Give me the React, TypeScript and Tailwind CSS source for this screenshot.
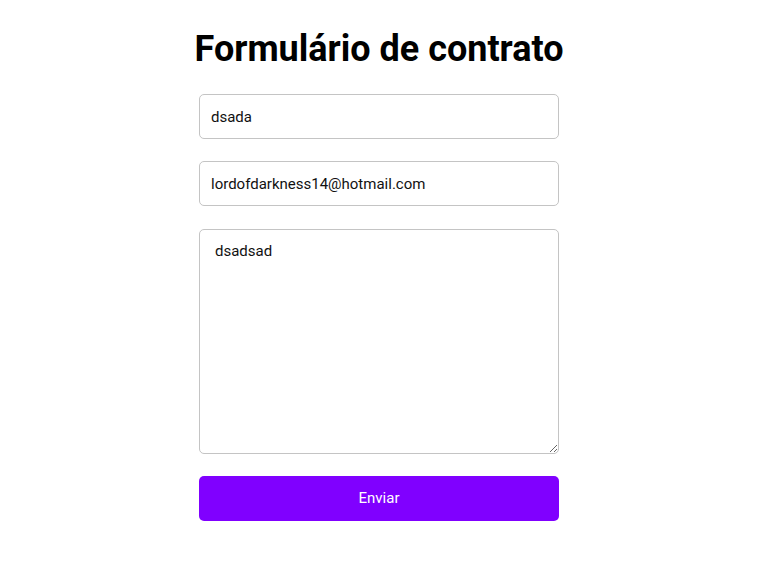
import React, { useState } from "react";

const App = (): JSX.Element => {
  const [nome, setNome] = useState("dsada");
  const [email, setEmail] = useState("lordofdarkness14@hotmail.com");
  const [mensagem, setMensagem] = useState("dsadsad");

  return (
    <div className="min-h-screen bg-white pr-[1px] font-['Roboto',sans-serif] text-black">
      <div className="mx-auto flex w-[360px] flex-col items-center pt-[28px]">
        <h1 className="whitespace-nowrap text-[36px] font-bold leading-[42px]">Formulário de contrato</h1>
        <form className="mt-[24px] flex w-full flex-col" onSubmit={(e) => e.preventDefault()}>
          <input
            value={nome}
            onChange={(e) => setNome(e.target.value)}
            className="h-[45px] w-full rounded-[5px] border border-[#c4c4c4] px-[11px] text-[15px] text-[#111] outline-none"
          />
          <input
            value={email}
            onChange={(e) => setEmail(e.target.value)}
            className="mt-[22px] h-[45px] w-full rounded-[5px] border border-[#c4c4c4] px-[11px] text-[15px] text-[#111] outline-none"
          />
          <textarea
            value={mensagem}
            onChange={(e) => setMensagem(e.target.value)}
            className="mt-[23px] h-[225px] w-full rounded-[5px] border border-[#c4c4c4] px-[15px] py-[10px] text-[15px] text-[#111] outline-none"
          />
          <button
            type="submit"
            className="mt-[22px] h-[45px] w-full rounded-[5px] bg-[#8000ff] text-[15px] text-white"
          >
            Enviar
          </button>
        </form>
      </div>
    </div>
  );
};

export default App;
